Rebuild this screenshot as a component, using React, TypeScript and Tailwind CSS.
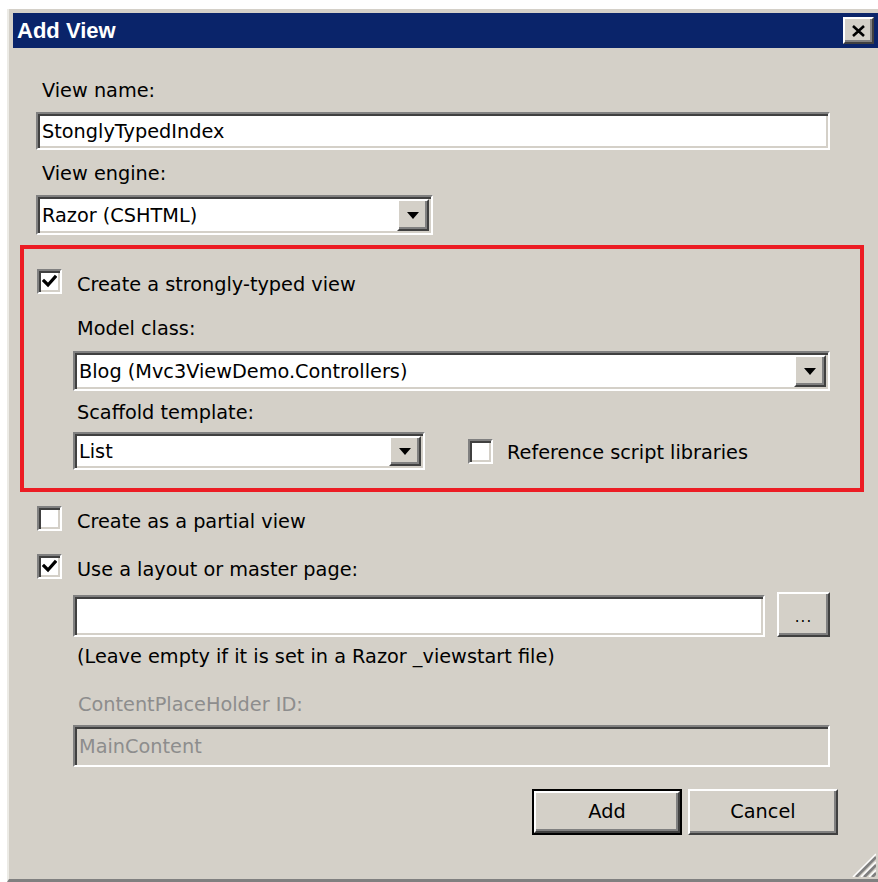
import type { ReactNode } from 'react';

// Classic 3D bevels, drawn twice as thick as the old 1px look
const sunken =
  'border-2 border-t-[#808080] border-l-[#808080] border-b-white border-r-white shadow-[inset_2px_2px_0_#404040,inset_-2px_-2px_0_#d4d0c8]';
const raised =
  'border-2 border-t-white border-l-white border-b-[#404040] border-r-[#404040] shadow-[inset_-2px_-2px_0_#808080]';

function CheckBox({ checked }: { checked?: boolean }) {
  return (
    <div className={`w-[25px] h-[25px] bg-white shrink-0 ${sunken} flex items-center justify-center`}>
      {checked && (
        <svg width="15" height="15" viewBox="0 0 15 15">
          <polyline points="2,7 6,11 13,3" fill="none" stroke="#000" strokeWidth="3.2" strokeLinecap="square" />
        </svg>
      )}
    </div>
  );
}

function DropArrow() {
  return (
    <div className={`w-[32px] h-full bg-[#d4d0c8] ${raised} flex items-center justify-center`}>
      <svg width="12" height="7" viewBox="0 0 12 7">
        <polygon points="0,0 12,0 6,7" fill="#000" />
      </svg>
    </div>
  );
}

function ComboBox({ value, className }: { value: string; className: string }) {
  return (
    <div className={`bg-white ${sunken} flex items-center pl-[4px] pr-[2px] py-[2px] ${className}`}>
      <span className="flex-1 leading-none pt-[2px]">{value}</span>
      <DropArrow />
    </div>
  );
}

function Label({ children, className = '' }: { children: ReactNode; className?: string }) {
  return <div className={`h-[28px] flex items-center pt-[3px] ${className}`}>{children}</div>;
}

function CheckRow({ checked, text, className = '' }: { checked?: boolean; text: string; className?: string }) {
  return (
    <div className={`h-[28px] flex items-center ${className}`}>
      <CheckBox checked={checked} />
      <span className="ml-[15px] pt-[8px]">{text}</span>
    </div>
  );
}

function Button({ children, isDefault }: { children: ReactNode; isDefault?: boolean }) {
  return (
    <div
      className={`w-[150px] h-[46px] bg-[#d4d0c8] flex items-center justify-center ${
        isDefault ? 'border-2 border-black' : ''
      }`}
    >
      <div className={`w-full h-full ${raised} flex items-center justify-center`}>{children}</div>
    </div>
  );
}

export default function App() {
  return (
    <div className="w-[878px] h-[882px] bg-white pt-[9px] pl-[7px] overflow-hidden text-[19.3px] text-black font-['DejaVu_Sans',Verdana,sans-serif]">
      <div className="relative w-[871px] h-[873px] bg-[#d4d0c8] border-l-2 border-l-[#ecebe6] border-b-[3px] border-b-[#808080] pt-[4px]">
        {/* title bar */}
        <div className="ml-[4px] h-[35px] bg-[#0a246a] flex items-center justify-between pr-[4px]">
          <span className="pl-[4px] text-white font-bold text-[22px] font-['Liberation_Sans',Arial,sans-serif]">
            Add View
          </span>
          <div className={`w-[31px] h-[27px] bg-[#d4d0c8] ${raised} flex items-center justify-center`}>
            <svg width="13" height="12" viewBox="0 0 13 12">
              <path d="M1 1 L12 11 M12 1 L1 11" stroke="#000" strokeWidth="2.6" />
            </svg>
          </div>
        </div>

        <div className="flex flex-col">
          <Label className="mt-[28px] pl-[33px]">View name:</Label>
          <div className={`mt-[8px] ml-[27px] w-[794px] h-[38px] bg-white ${sunken} flex items-center pl-[4px] pt-[2px]`}>
            StonglyTypedIndex
          </div>

          <Label className="mt-[9px] pl-[33px]">View engine:</Label>
          <ComboBox value="Razor (CSHTML)" className="mt-[8px] ml-[27px] w-[397px] h-[40px]" />

          {/* highlighted strongly-typed section */}
          <div className="mt-[10px] ml-[11px] w-[844px] h-[247px] border-4 border-[#ec1c24] flex flex-col">
            <CheckRow checked text="Create a strongly-typed view" className="mt-[18px] pl-[13px]" />
            <Label className="mt-[19px] pl-[53px]">Model class:</Label>
            <ComboBox value="Blog (Mvc3ViewDemo.Controllers)" className="mt-[9px] ml-[49px] w-[757px] h-[40px]" />
            <Label className="mt-[7px] pl-[53px]">Scaffold template:</Label>
            <div className="mt-[6px] h-[38px] flex items-center">
              <ComboBox value="List" className="ml-[49px] w-[352px] h-[38px]" />
              <div className="ml-[43px] flex items-center">
                <CheckBox />
                <span className="ml-[14px] pt-[5px]">Reference script libraries</span>
              </div>
            </div>
          </div>

          <CheckRow text="Create as a partial view" className="mt-[12px] pl-[28px]" />
          <CheckRow checked text="Use a layout or master page:" className="mt-[20px] pl-[28px]" />

          <div className="mt-[12px] h-[45px] flex items-end pl-[64px]">
            <div className={`w-[692px] h-[42px] bg-white ${sunken}`} />
            <div className={`ml-[12px] w-[53px] h-[45px] bg-[#d4d0c8] ${raised} flex items-center justify-center pt-[6px]`}>
              <span className="text-[15px] tracking-[1px]">...</span>
            </div>
          </div>

          <Label className="mt-[5px] pl-[68px]">(Leave empty if it is set in a Razor _viewstart file)</Label>
          <Label className="mt-[20px] pl-[69px] text-[#8d8d8d]">ContentPlaceHolder ID:</Label>
          <div className={`mt-[7px] ml-[64px] w-[757px] h-[42px] ${sunken} bg-[#d4d0c8] flex items-center pl-[4px] pt-[2px] text-[#8d8d8d]`}>
            MainContent
          </div>

          <div className="mt-[22px] flex justify-end gap-[6px] pr-[40px]">
            <Button isDefault>Add</Button>
            <Button>Cancel</Button>
          </div>
        </div>

        {/* size grip */}
        <svg className="absolute right-[2px] bottom-[2px]" width="24" height="24" viewBox="0 0 24 24">
          <path d="M24 4 L4 24 M24 12 L12 24 M24 20 L20 24" stroke="#808080" strokeWidth="3" />
          <path d="M24 1 L1 24 M24 9 L9 24 M24 17 L17 24" stroke="#ffffff" strokeWidth="1.5" />
        </svg>
      </div>
    </div>
  );
}
